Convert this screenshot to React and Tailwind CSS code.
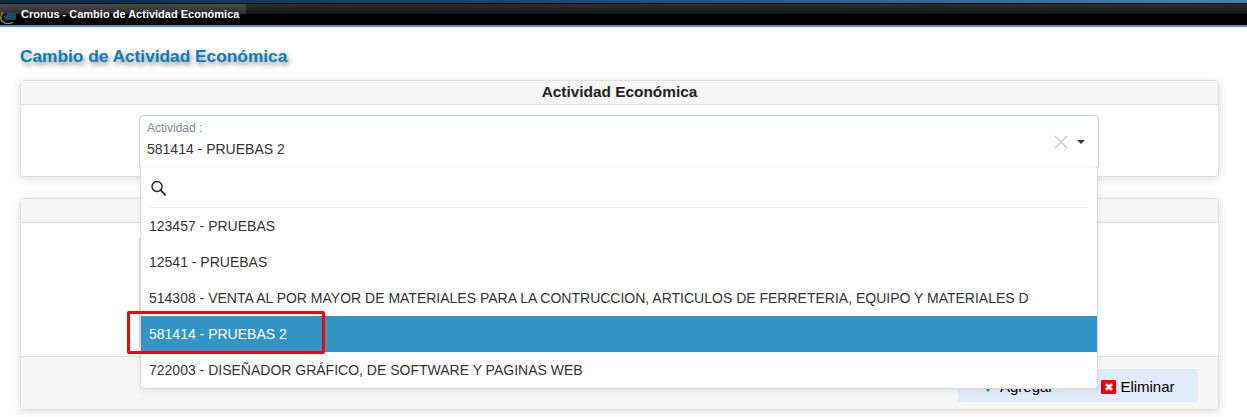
const OPTIONS = [
  '123457 - PRUEBAS',
  '12541 - PRUEBAS',
  '514308 - VENTA AL POR MAYOR DE MATERIALES PARA LA CONTRUCCION, ARTICULOS DE FERRETERIA, EQUIPO Y MATERIALES D',
  '581414 - PRUEBAS 2',
  '722003 - DISEÑADOR GRÁFICO, DE SOFTWARE Y PAGINAS WEB',
];

function TopBar() {
  return (
    <div className="h-[27px] flex flex-col">
      <div className="h-[3px] bg-gradient-to-r from-[#0f2a45] via-[#1f4e7c] to-[#4284b5]" />
      <div className="h-px bg-[#0a0a0a]" />
      <div className="relative flex-1 bg-[linear-gradient(#2e2e2e_0%,#151515_48%,#000_48%,#000_100%)]">
        <div className="h-full w-[246px] flex items-center bg-[linear-gradient(#4a4a4a_0%,#2c2c2c_48%,#000_48%,#000_100%)]">
          <svg width="16" height="18" viewBox="0 0 16 18" className="shrink-0">
            <path d="M3 6 C0 9 0 14 3 16 C6 18 10 18 13 16" fill="none" stroke="#7fa32a" strokeWidth="1.5" />
            <path d="M6.5 14 a2.5 2.5 0 0 1 0-5 a4 4 0 0 1 6-2.5 a3.5 3.5 0 0 1 1.5 7.5 z" fill="#1a4a6e" />
          </svg>
          <span className="ml-[5px] text-[11px] font-bold text-white">Cronus - Cambio de Actividad Económica</span>
        </div>
      </div>
      <div className="h-[2px] bg-[#5a8fd0]" />
    </div>
  );
}

function Card({ className, children }) {
  return (
    <div className={`ml-5 mr-7 rounded-[4px] bg-white border border-[#e0e0e0] shadow-[0_2px_8px_rgba(0,0,0,0.14)] ${className}`}>
      {children}
    </div>
  );
}

function Dropdown() {
  return (
    <div className="absolute left-0 top-[52px] z-10 w-[958px] h-[221px] rounded-b-[4px] bg-white border border-t-0 border-[#d5dbe0] shadow-[0_2px_6px_rgba(0,0,0,0.08)]">
      <div className="ml-2 mr-[9px] h-10 flex items-center border-b border-[#f0f0f0]">
        <svg width="18" height="18" viewBox="0 0 18 18" fill="none" stroke="#222" strokeWidth="1.4">
          <circle cx="8" cy="7.5" r="5" />
          <path d="M11.7 11.2 L16.6 16.4" strokeWidth="1.7" />
        </svg>
      </div>
      {OPTIONS.map((opt, i) => (
        <div
          key={opt}
          className={`h-9 px-2 flex items-center text-[14px] ${i === 3 ? 'bg-[#3394c6] text-white' : 'text-[#333]'}`}
        >
          {opt}
        </div>
      ))}
    </div>
  );
}

export default function App() {
  return (
    <div className="relative h-[417px] w-[1247px] overflow-hidden bg-white font-['Liberation_Sans',Arial,sans-serif]">
      <TopBar />
      <h1 className="ml-5 mt-[19px] h-[34px] text-[17.3px] leading-5 font-bold text-[#0e7cb8] [text-shadow:2px_3px_5px_rgba(0,0,0,0.45)]">
        Cambio de Actividad Económica
      </h1>

      <Card className="h-[97px]">
        <div className="h-6 pb-[2px] flex items-center justify-center bg-[#f6f6f6] border-b border-[#dcdcdc] text-[15.4px] font-bold text-[#222]">
          Actividad Económica
        </div>
        <div className="pt-[10px] pl-[118px]">
          <div className="relative w-[960px] h-[54px] rounded-[4px] border border-[#c8cfd3] flex items-start">
            <div className="pl-[7px] flex-1">
              <div className="mt-[5px] text-[12px] leading-[14px] text-[#7b8794]">Actividad :</div>
              <div className="mt-[5px] text-[14px] leading-[18px] text-[#333]">581414 - PRUEBAS 2</div>
            </div>
            <svg width="14" height="14" viewBox="0 0 14 14" className="mt-[19px] mr-[9px]">
              <path d="M1 1 L13 13 M13 1 L1 13" stroke="#c4c4c4" strokeWidth="1.3" />
            </svg>
            <div className="mt-6 mr-[13px] w-0 h-0 border-x-4 border-x-transparent border-t-[4px] border-t-[#2b3a4a]" />
            <Dropdown />
          </div>
        </div>
      </Card>

      <Card className="mt-[21px] h-[212px] flex flex-col">
        <div className="h-6 bg-[#f6f6f6] border-b border-[#dcdcdc]" />
        <div className="flex-1 pt-[15px] pl-[118px]">
          <div className="w-[2px] h-[110px] bg-[#d5dade]" />
        </div>
        <div className="h-[53px] bg-[#f6f6f6] border-t border-[#dcdcdc] flex justify-end pt-3 pr-5">
          <div className="w-[240px] h-[33px] pt-[3px] bg-[#e0ecfc] flex items-center text-[15px] text-black">
            <svg width="10" height="10" viewBox="0 0 10 10" className="ml-[25px] mt-[2px]">
              <path d="M0 2 L10 2 L5 9 z" fill="#2e9e3a" />
            </svg>
            <span className="ml-[7px]">Agregar</span>
            <span className="ml-[48px] w-[15px] h-[14px] rounded-[1px] bg-[#f00000] flex items-center justify-center">
              <svg width="10" height="10" viewBox="0 0 10 10">
                <path d="M2 2 L8 8 M8 2 L2 8" stroke="#fff" strokeWidth="2.6" />
              </svg>
            </span>
            <span className="ml-[4px]">Eliminar</span>
          </div>
        </div>
      </Card>

      <div className="absolute left-[127px] top-[311px] z-20 w-[198px] h-[43px] border-[3px] border-[#ff0000] rounded-[2px]" />
    </div>
  );
}
